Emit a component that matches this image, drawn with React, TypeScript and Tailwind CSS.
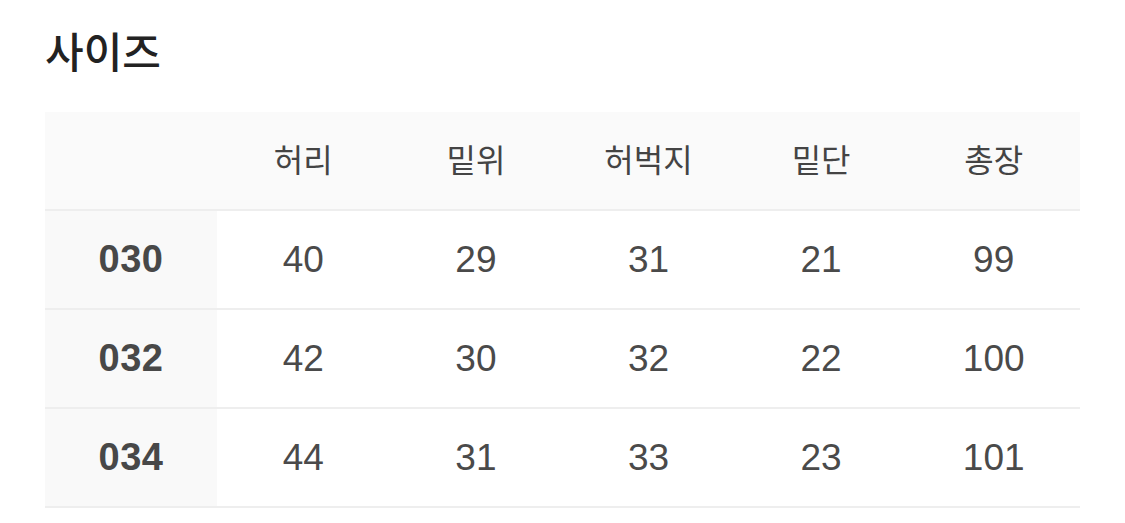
import React from "react";

const headers = ["허리", "밑위", "허벅지", "밑단", "총장"];
const rows: [string, string[]][] = [
  ["030", ["40", "29", "31", "21", "99"]],
  ["032", ["42", "30", "32", "22", "100"]],
  ["034", ["44", "31", "33", "23", "101"]],
];

export default function App() {
  return (
    <div
      className="w-[1125px] h-[523px] bg-white pl-[45px] overflow-hidden"
      style={{ fontFamily: '"Liberation Sans", "Noto Sans CJK KR", sans-serif' }}
    >
      <div className="pt-[32px] h-[112px]">
        <h1 className="text-[42px] leading-[44px] font-medium text-[#222]">사이즈</h1>
      </div>
      <div className="w-[1035px] grid grid-cols-[172px_repeat(5,1fr)]">
        <div className="h-[99px] bg-[#fafafa] border-b-2 border-[#eeeeee]" />
        {headers.map((h) => (
          <div
            key={h}
            className="h-[99px] bg-[#fafafa] border-b-2 border-[#eeeeee] flex items-center justify-center text-[32px] text-[#444]"
          >
            {h}
          </div>
        ))}
        {rows.map(([label, vals]) => (
          <React.Fragment key={label}>
            <div className="h-[99px] bg-[#f9f9f9] border-b-2 border-[#eeeeee] flex items-center justify-center text-[38px] font-bold tracking-[0.5px] text-[#484848]">
              {label}
            </div>
            {vals.map((v, i) => (
              <div
                key={i}
                className="h-[99px] bg-white border-b-2 border-[#eeeeee] flex items-center justify-center text-[37px] text-[#4a4a4a]"
              >
                {v}
              </div>
            ))}
          </React.Fragment>
        ))}
      </div>
    </div>
  );
}
